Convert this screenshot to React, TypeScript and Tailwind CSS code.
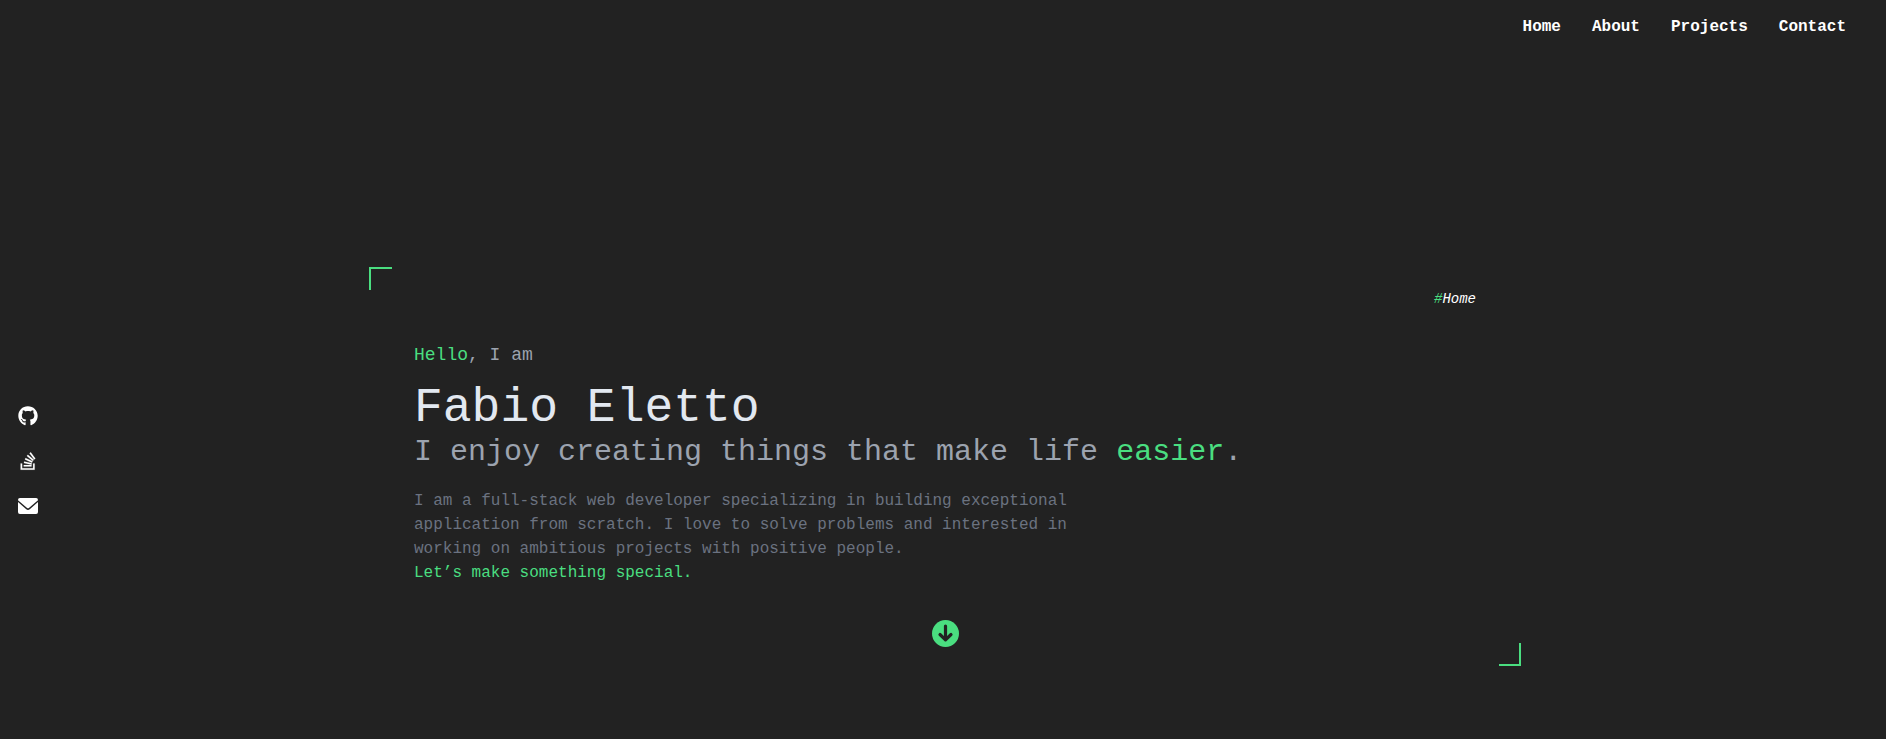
import { FaGithub, FaStackOverflow } from "react-icons/fa";

const navLinks = ["Home", "About", "Projects", "Contact"];

function StackOverflowIcon({ size }: { size: number }) {
  return <FaStackOverflow size={size} strokeWidth={4} />;
}

function EnvelopeIcon({ size }: { size: number }) {
  return (
    <svg width={size} height={size} viewBox="0 0 20 20" fill="currentColor" aria-hidden="true">
      <path d="M1.9 2h16.2A1.9 1.9 0 0 1 20 3.9v.3l-8.8 7.6a1.8 1.8 0 0 1-2.4 0L0 4.2v-.3A1.9 1.9 0 0 1 1.9 2Z" />
      <path d="M0 6l8 7.1a3 3 0 0 0 4 0L20 6v10.1a1.9 1.9 0 0 1-1.9 1.9H1.9A1.9 1.9 0 0 1 0 16.1Z" />
    </svg>
  );
}

function ArrowDownIcon({ size }: { size: number }) {
  return (
    <svg width={size} height={size} viewBox="0 0 27 27" fill="none" aria-hidden="true">
      <circle cx="13.5" cy="13.5" r="13.5" fill="currentColor" />
      <path
        d="M13.5 6v13.6M8 14.5l5.5 5.3 5.5-5.3"
        stroke="#222222"
        strokeWidth="3.2"
        strokeLinecap="round"
        strokeLinejoin="round"
      />
    </svg>
  );
}

const socialLinks = [
  { label: "GitHub", href: "#github", Icon: FaGithub },
  { label: "Stack Overflow", href: "#stack-overflow", Icon: StackOverflowIcon },
  { label: "Email", href: "#email", Icon: EnvelopeIcon },
];

function Header() {
  return (
    <header className="flex justify-end px-10 pt-[15px] pb-[17px]">
      <nav className="flex gap-[31px] font-bold text-white">
        {navLinks.map((name) => (
          <a key={name} href={`#${name.toLowerCase()}`}>
            {name}
          </a>
        ))}
      </nav>
    </header>
  );
}

function SocialRail() {
  return (
    <aside className="flex w-14 shrink-0 flex-col items-center gap-[25px] pb-3 text-white">
      {socialLinks.map(({ label, href, Icon }) => (
        <a key={label} href={href} aria-label={label}>
          <Icon size={20} />
        </a>
      ))}
    </aside>
  );
}

function Hero() {
  return (
    <section id="home" className="relative w-full max-w-6xl px-[45px] pt-[22px] pb-[19px]">
      <span className="absolute top-0 left-0 size-[23px] border-t-2 border-l-2 border-[#4ade80]" />
      <span className="absolute right-0 bottom-0 h-[23px] w-[22px] border-r-2 border-b-2 border-[#4ade80]" />

      <p className="text-right text-sm text-white italic">
        <span className="text-[#4ade80]">#</span>Home
      </p>

      <p className="mt-8 text-lg text-[#9ca3af]">
        <span className="text-[#4ade80]">Hello</span>, I am
      </p>
      <h1 className="mt-[15px] text-5xl text-[#e2e8f0]">Fabio Eletto</h1>
      <h2 className="mt-[2px] text-3xl text-[#9ca3af]">
        I enjoy creating things that make life <span className="text-[#4ade80]">easier</span>.
      </h2>
      <p className="mt-[19px] max-w-2xl text-[#6b7280]">
        I am a full-stack web developer specializing in building exceptional application from
        scratch. I love to solve problems and interested in working on ambitious projects with
        positive people.
        <br />
        <span className="text-[#4ade80]">Let’s make something special.</span>
      </p>

      <div className="mt-[35px] flex justify-center">
        <a href="#about" aria-label="Scroll to about" className="text-[#4ade80]">
          <ArrowDownIcon size={27} />
        </a>
      </div>
    </section>
  );
}

export default function App() {
  return (
    <div className="flex min-h-screen flex-col bg-[#222222] font-['Liberation_Mono',monospace]">
      <Header />
      <div className="flex items-center pt-[211px] pb-[72px]">
        <SocialRail />
        <main className="flex flex-1 justify-center pr-[52px]">
          <Hero />
        </main>
      </div>
    </div>
  );
}
